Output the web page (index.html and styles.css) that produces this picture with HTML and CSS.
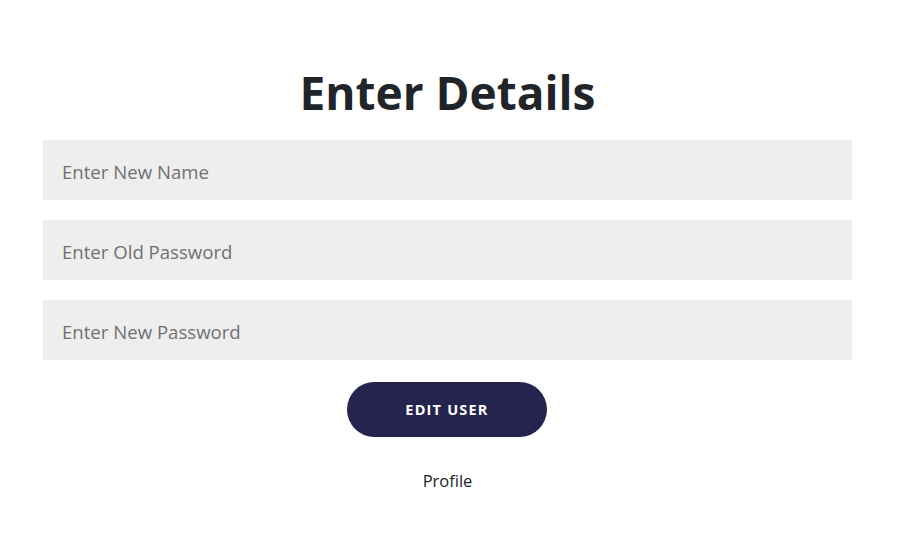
FILE: index.html
```html
<!DOCTYPE html>
<html>
<head>
<meta charset="utf-8">
<link rel="stylesheet" href="styles.css">
</head>
<body>
<div class="page">
  <h1 class="title">Enter Details</h1>
  <form class="form">
    <input class="field" type="text" placeholder="Enter New Name">
    <input class="field" type="password" placeholder="Enter Old Password">
    <input class="field" type="password" placeholder="Enter New Password">
    <button class="btn" type="button">EDIT USER</button>
  </form>
  <a class="link">Profile</a>
</div>
</body>
</html>
```
FILE: styles.css
```css
* { box-sizing: border-box; }
body {
  margin: 0;
  background: #fff;
  font-family: "Open Sans", "Noto Sans", sans-serif;
  color: #212529;
}
.page {
  display: flex;
  flex-direction: column;
  align-items: center;
  padding: 60px 51px 0 43px;
}
.title {
  margin: 0 0 16px;
  font-size: 46px;
  font-weight: 700;
  line-height: 64px;
  color: #212529;
}
.form {
  width: 100%;
  display: flex;
  flex-direction: column;
  align-items: center;
  gap: 20px;
}
.field {
  width: 100%;
  height: 60px;
  border: none;
  outline: none;
  background: #eeeeee;
  padding: 2px 19px 0;
  font-family: inherit;
  font-size: 18.6px;
  color: #212529;
}
.field::placeholder { color: #717171; }
.btn {
  margin-top: 2px;
  margin-right: 1px;
  width: 200px;
  height: 55px;
  border: none;
  border-radius: 28px;
  background: #25244f;
  color: #fff;
  font-family: inherit;
  font-size: 14.5px;
  font-weight: 700;
  letter-spacing: 1.2px;
}
.link {
  margin-top: 32px;
  font-size: 16.5px;
  color: #212529;
}
```
